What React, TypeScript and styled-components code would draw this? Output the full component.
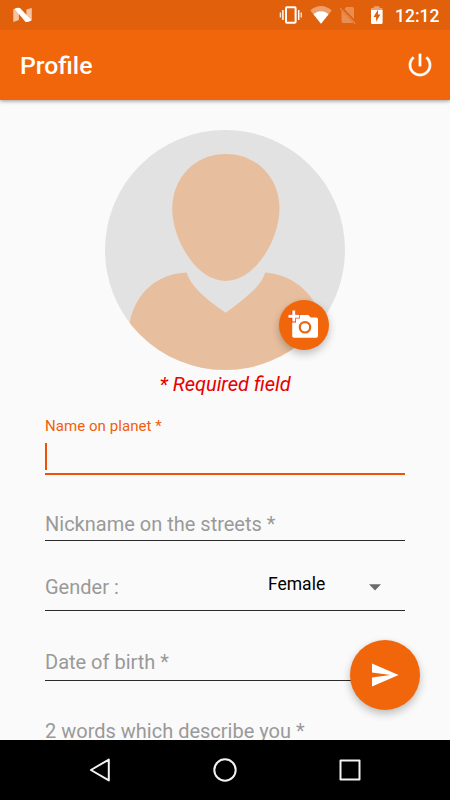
import React from "react";
import styled, { createGlobalStyle } from "styled-components";

const GlobalStyle = createGlobalStyle`
  * { box-sizing: border-box; }
  body { margin: 0; background: #fafafa; font-family: Roboto, sans-serif; }
  svg { display: block; }
`;

const Screen = styled.div`
  position: relative;
  display: flex;
  flex-direction: column;
  width: 450px;
  height: 800px;
  overflow: hidden;
  background: #fafafa;
`;

const StatusBar = styled.header`
  position: relative;
  z-index: 2;
  flex: none;
  display: flex;
  align-items: center;
  justify-content: space-between;
  height: 30px;
  padding: 0 10px 0 13px;
  background: #e0600b;
  color: #fff;
`;

const StatusIcons = styled.div`
  display: flex;
  align-items: center;
`;

const Clock = styled.span`
  width: 45px;
  margin-left: 11px;
  font-size: 17.5px;
  font-weight: 500;
  line-height: 30px;
  white-space: nowrap;
  padding-top: 1px;
`;

const AppBar = styled.div`
  position: relative;
  z-index: 1;
  flex: none;
  display: flex;
  align-items: center;
  justify-content: space-between;
  height: 70px;
  padding: 0 15px 0 20px;
  background: #f1660a;
  color: #fff;
  box-shadow: 0 1px 4px rgba(0, 0, 0, 0.4);
`;

const Title = styled.h1`
  margin: 2px 0 0;
  font-size: 24.8px;
  font-weight: 500;
  line-height: 30px;
`;

const BarButton = styled.button`
  padding: 0;
  border: 0;
  background: none;
  color: inherit;
`;

const Content = styled.main`
  flex: 1;
  min-height: 0;
  overflow: hidden;
  padding: 30px 45px 0;
`;

const AvatarBox = styled.div`
  position: relative;
  width: 240px;
  height: 240px;
  margin: 0 auto;
`;

const RoundButton = styled.button<{ $size: number }>`
  position: absolute;
  width: ${(p) => p.$size}px;
  height: ${(p) => p.$size}px;
  padding: 0;
  border: 0;
  border-radius: 50%;
  display: flex;
  align-items: center;
  justify-content: center;
  background: #f1660a;
  box-shadow: 0 4px 9px rgba(0, 0, 0, 0.24), 0 0 3px rgba(0, 0, 0, 0.06);
`;

const PhotoButton = styled(RoundButton)`
  left: 174px;
  top: 170px;
`;

const SendButton = styled(RoundButton)`
  right: 30px;
  bottom: 90px;
`;

const Required = styled.p`
  margin: 0;
  height: 28px;
  font-size: 20px;
  font-style: italic;
  line-height: 28px;
  text-align: center;
  color: #e60000;
`;

const FocusedField = styled.div`
  height: 77px;
  padding-top: 18px;
  border-bottom: 2px solid #ee5206;
`;

const FloatingLabel = styled.label`
  display: block;
  height: 20px;
  font-size: 15px;
  line-height: 20px;
  letter-spacing: 0.06px;
  color: #f0600a;
`;

const Caret = styled.div`
  width: 2px;
  height: 27px;
  margin-top: 7px;
  background: #ee5206;
`;

const Field = styled.div<{ $height: number; $gap: number }>`
  display: flex;
  align-items: flex-end;
  height: ${(p) => p.$height}px;
  padding-bottom: ${(p) => p.$gap}px;
  border-bottom: 1px solid #2b2b2b;
`;

const Hint = styled.span`
  font-size: 20px;
  line-height: 24px;
  color: #999;
  white-space: nowrap;
`;

const Spinner = styled.div`
  display: flex;
  align-items: center;
  width: 137px;
  margin-left: auto;
  margin-bottom: 4px;
`;

const SpinnerValue = styled.span`
  flex: 1;
  font-size: 17.5px;
  line-height: 22px;
  color: #000;
`;

const SpinnerArrow = styled.svg`
  margin: 6px 24px 0 0;
`;

const NavBar = styled.nav`
  flex: none;
  display: flex;
  align-items: center;
  justify-content: space-between;
  height: 60px;
  padding: 0 85px;
  background: #000;
`;

const NougatLogo = () => (
  <svg width="20" height="16" viewBox="0 0 20 16">
    <path d="M.3 2.6 2.6 1.2 5.9 5.2V13L.3 15z M13.4 2.5 18.8.9V13l-1.4 1-4-3.8z" fill="#f3c5a4" />
    <path d="M1.7 1.9Q4 .3 7 1L18.5 13.2Q16 15.4 12.6 14.9z" fill="#fff" />
  </svg>
);

const VibrateIcon = () => (
  <svg width="24" height="30" viewBox="0 0 24 30" fill="none" stroke="#fff">
    <rect x="7" y="7.2" width="9.6" height="15.6" rx=".8" strokeWidth="2" />
    <path d="M3.9 10v10M19.7 10v10" strokeWidth="1.5" />
    <path d="M1.4 12.5v5M22.2 12.5v5" strokeWidth="1.4" opacity=".85" />
  </svg>
);

const WifiIcon = () => (
  <svg width="22" height="30" viewBox="0 0 22 30">
    <path d="M.3 10.6C6.5 4.5 15.4 4.5 21.7 10.6L11 23.8z" fill="#eca06e" />
    <path d="M3.5 14.3c4.3-4 10.7-4 15 0L11 23.8z" fill="#fff" />
  </svg>
);

const NoSimIcon = () => (
  <svg width="18" height="30" viewBox="0 0 18 30">
    <path d="M6.5 7H12.4q1.6 0 1.6 1.6V18.9L4.4 9z M1.5 10.8 13.4 22.9H3Q1.5 22.9 1.5 21.3z" fill="#e98d51" />
    <path d="M0 8.2 15.3 23.6" stroke="#e98d51" strokeWidth="1.3" />
  </svg>
);

const BatteryIcon = () => (
  <svg width="13" height="30" viewBox="0 0 13 30">
    <path d="M0 8h2.8V6.2h5.8V8h2.8v2.2H0z" fill="#eca06e" />
    <path d="M0 10h11.6v12.7q0 1.3-1.3 1.3H1.3Q0 24 0 22.7z" fill="#fff" />
    <path d="M7.1 9.6 2.5 16.9h2.6v4.9l4.3-7.4H6.9z" fill="#e0600b" />
  </svg>
);

const PowerIcon = () => (
  <svg width="30" height="30" viewBox="0 0 24 24" fill="#fff">
    <path d="M13 3h-2v10h2V3zm4.83 2.17-1.42 1.42C17.99 7.86 19 9.81 19 12c0 3.87-3.13 7-7 7s-7-3.13-7-7c0-2.19 1.01-4.14 2.58-5.42L6.17 5.17C4.23 6.82 3 9.26 3 12c0 4.97 4.03 9 9 9s9-4.03 9-9c0-2.74-1.23-5.18-3.17-6.83z" stroke="#fff" strokeWidth=".2" />
  </svg>
);

const Portrait = () => (
  <svg width="240" height="240" viewBox="0 0 240 240">
    <defs>
      <clipPath id="disc">
        <circle cx="120" cy="120" r="120" />
      </clipPath>
    </defs>
    <circle cx="120" cy="120" r="120" fill="#e2e2e2" />
    <g clipPath="url(#disc)" fill="#e8bf9e">
      <path d="M120.8 23.9C151 23.9 174.5 47 174.5 79C174.5 108 151 150.9 120.8 150.9C90.5 150.9 67.2 108 67.2 79C67.2 47 90.5 23.9 120.8 23.9z" />
      <path d="M24 240V197C28 165 51 143.5 81.5 142.5C86 156 99 168 120.8 182.8C142 167 156 156 160.3 142.5C190 145 212 165 219 197V240z" />
    </g>
  </svg>
);

const AddPhotoIcon = () => (
  <svg width="50" height="50" viewBox="0 0 50 50">
    <path d="M15 15H29.3L31.8 17.5H37.2Q39 17.5 39 19.3V36Q39 37.8 37.2 37.8H15Q13.2 37.8 13.2 36V18z" fill="#fff" />
    <path d="M14.8 11v11.5M9.5 16.3h11.3" stroke="#ec3e0c" strokeWidth="4.4" />
    <path d="M14.8 10.6v11M9.4 16.3h10.8" stroke="#fff" strokeWidth="2.9" />
    <circle cx="26" cy="27.3" r="5.2" fill="none" stroke="#ec650e" strokeWidth="2.2" />
  </svg>
);

const SendIcon = () => (
  <svg width="30" height="30" viewBox="0 0 30 30" fill="#fff">
    <path d="M2 3.6 28.6 15 2 26.4V17.4L20.5 15 2 12.6z" />
  </svg>
);

const NavIcon = ({ d, circle }: { d?: string; circle?: boolean }) => (
  <svg width="30" height="30" viewBox="0 0 30 30" fill="none" stroke="#f2f2f2" strokeWidth="2" strokeLinejoin="round">
    {circle ? <circle cx="15" cy="15" r="10.7" /> : <path d={d} />}
  </svg>
);

const Status = styled.div<{ $left: number }>`
  margin-left: ${(p) => p.$left}px;
`;

export default function App() {
  return (
    <>
      <GlobalStyle />
      <Screen>
        <StatusBar>
          <NougatLogo />
          <StatusIcons>
            <VibrateIcon />
            <Status $left={7}><WifiIcon /></Status>
            <Status $left={8}><NoSimIcon /></Status>
            <Status $left={13}><BatteryIcon /></Status>
            <Clock>12:12</Clock>
          </StatusIcons>
        </StatusBar>
        <AppBar>
          <Title>Profile</Title>
          <BarButton aria-label="Log out"><PowerIcon /></BarButton>
        </AppBar>
        <Content>
          <AvatarBox>
            <Portrait />
            <PhotoButton $size={50} aria-label="Add photo"><AddPhotoIcon /></PhotoButton>
          </AvatarBox>
          <Required>* Required field</Required>
          <FocusedField>
            <FloatingLabel>Name on planet *</FloatingLabel>
            <Caret />
          </FocusedField>
          <Field $height={66} $gap={4}>
            <Hint>Nickname on the streets *</Hint>
          </Field>
          <Field $height={70} $gap={11}>
            <Hint>Gender :</Hint>
            <Spinner>
              <SpinnerValue>Female</SpinnerValue>
              <SpinnerArrow width="12" height="7" viewBox="0 0 12 7">
                <path d="M0 .3H12L6 6.5z" fill="#6b6b6b" />
              </SpinnerArrow>
            </Spinner>
          </Field>
          <Field $height={70} $gap={6}>
            <Hint>Date of birth *</Hint>
          </Field>
          <Field $height={70} $gap={7}>
            <Hint>2 words which describe you *</Hint>
          </Field>
        </Content>
        <NavBar>
          <NavIcon d="M5.9 15 23.8 4.6V25.4z" />
          <NavIcon circle />
          <NavIcon d="M5.5 5.5H24.5V24.5H5.5z" />
        </NavBar>
        <SendButton $size={70} aria-label="Send"><SendIcon /></SendButton>
      </Screen>
    </>
  );
}
